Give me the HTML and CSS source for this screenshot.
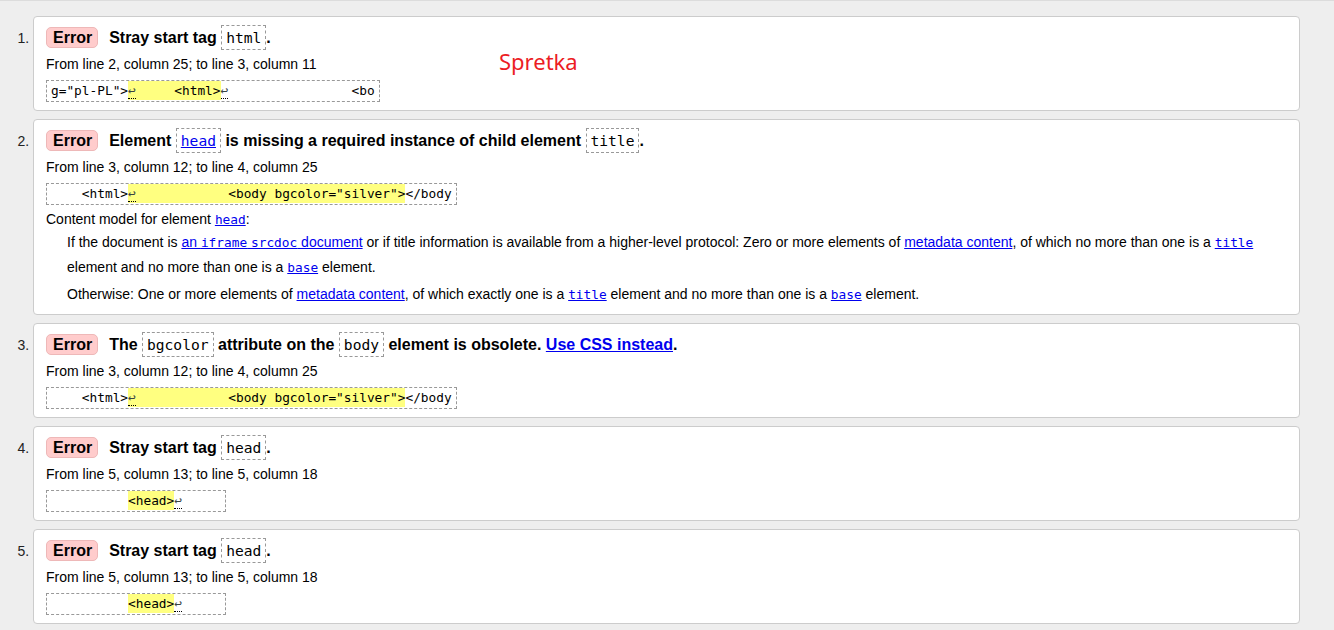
FILE: index.html
```html
<!DOCTYPE html>
<html lang="en">
<head>
<meta charset="utf-8">
<title>Validation results</title>
<link rel="stylesheet" href="styles.css">
</head>
<body>
<ol class="results">
  <li class="msg">
    <p class="title"><span class="badge">Error</span><span class="text">Stray start tag <code class="tag">html</code>.</span></p>
    <p class="location">From line 2, column 25; to line 3, column 11</p>
    <p class="extract"><code>g="pl-PL"&gt;<mark><b class="lf">↩</b>     &lt;html&gt;</mark><b class="lf">↩</b>                &lt;bo</code></p>
    <span class="note">Spretka</span>
  </li>
  <li class="msg">
    <p class="title"><span class="badge">Error</span><span class="text">Element <code class="tag"><a href="#">head</a></code> is missing a required instance of child element <code class="tag">title</code>.</span></p>
    <p class="location">From line 3, column 12; to line 4, column 25</p>
    <p class="extract"><code>    &lt;html&gt;<mark><b class="lf">↩</b>            &lt;body bgcolor="silver"&gt;</mark>&lt;/body</code></p>
    <p class="cm">Content model for element <a href="#"><code>head</code></a>:</p>
    <p class="cm-p">If the document is <a href="#">an <code>iframe</code> <code>srcdoc</code> document</a> or if title information is available from a higher-level protocol: Zero or more elements of <a href="#">metadata content</a>, of which no more than one is a <a href="#"><code>title</code></a> element and no more than one is a <a href="#"><code>base</code></a> element.</p>
    <p class="cm-p cm-p2">Otherwise: One or more elements of <a href="#">metadata content</a>, of which exactly one is a <a href="#"><code>title</code></a> element and no more than one is a <a href="#"><code>base</code></a> element.</p>
  </li>
  <li class="msg">
    <p class="title"><span class="badge">Error</span><span class="text">The <code class="tag">bgcolor</code> attribute on the <code class="tag">body</code> element is obsolete. <a href="#">Use CSS instead</a>.</span></p>
    <p class="location">From line 3, column 12; to line 4, column 25</p>
    <p class="extract"><code>    &lt;html&gt;<mark><b class="lf">↩</b>            &lt;body bgcolor="silver"&gt;</mark>&lt;/body</code></p>
  </li>
  <li class="msg">
    <p class="title"><span class="badge">Error</span><span class="text">Stray start tag <code class="tag">head</code>.</span></p>
    <p class="location">From line 5, column 13; to line 5, column 18</p>
    <p class="extract"><code>          <mark>&lt;head&gt;</mark><b class="lf">↩</b>     </code></p>
  </li>
  <li class="msg">
    <p class="title"><span class="badge">Error</span><span class="text">Stray start tag <code class="tag">head</code>.</span></p>
    <p class="location">From line 5, column 13; to line 5, column 18</p>
    <p class="extract"><code>          <mark>&lt;head&gt;</mark><b class="lf">↩</b>     </code></p>
  </li>
</ol>
</body>
</html>
```

FILE: styles.css
```css
html, body {
  margin: 0;
  padding: 0;
}

body {
  background: #eeeeee;
  border-top: 1px solid #dcdcdc;
  font-family: "Liberation Sans", Arial, sans-serif;
  font-size: 14px;
  color: #000;
}

.results {
  margin: 15px 34px 0 0;
  padding: 0 0 0 33px;
  list-style: decimal outside;
}

.results > li::marker {
  color: #222;
  font-size: 14px;
}

.msg {
  position: relative;
  background: #fff;
  border: 1px solid #cccccc;
  border-radius: 4px;
  padding: 8px 12px 7px 12px;
  margin-bottom: 8px;
}

.msg p {
  margin: 0;
}

.title {
  font-size: 16px;
  font-weight: bold;
  line-height: 25px;
}

.badge {
  display: inline-block;
  background: #ffcccc;
  border: 1px solid #eeb8b8;
  border-radius: 5px;
  padding: 0 5px 0 6px;
  line-height: 19px;
  margin-right: 11px;
}

.tag {
  display: inline-block;
  font-family: "DejaVu Sans Mono", "Liberation Mono", monospace;
  font-weight: normal;
  font-size: 14.6px;
  line-height: 17px;
  padding: 3px 4px;
  border: 1px dashed #999;
}

a {
  color: #0000ee;
  text-decoration: underline;
}

.tag a {
  color: #0000ee;
}

.location {
  margin-top: 4px !important;
  line-height: 20px;
}

.extract {
  margin: 6px 0 1px !important;
  display: inline-block;
  vertical-align: top;
  border: 1px dashed #999;
  padding: 0 4px;
}

.extract code {
  display: block;
  font-family: "DejaVu Sans Mono", "Liberation Mono", monospace;
  font-size: 12.8px;
  line-height: 20px;
  white-space: pre;
}

.extract mark {
  background: #ffff80;
  color: inherit;
  padding: 2px 0;
}

.lf {
  font-weight: normal;
  color: #3a4442;
  border-bottom: 1px dotted #000;
}

.cm {
  margin-top: 3px !important;
  line-height: 20px;
}

.cm-p {
  margin-left: 21px !important;
  line-height: 24px;
}

.cm-p2 {
  margin-top: 2px !important;
}

.cm code,
.cm-p code {
  font-family: "DejaVu Sans Mono", "Liberation Mono", monospace;
  font-size: 12.8px;
}

.note {
  position: absolute;
  left: 465px;
  top: 29px;
  font-family: "Noto Sans", "Open Sans", sans-serif;
  font-size: 22px;
  line-height: 30px;
  color: #ec1c24;
}
```
